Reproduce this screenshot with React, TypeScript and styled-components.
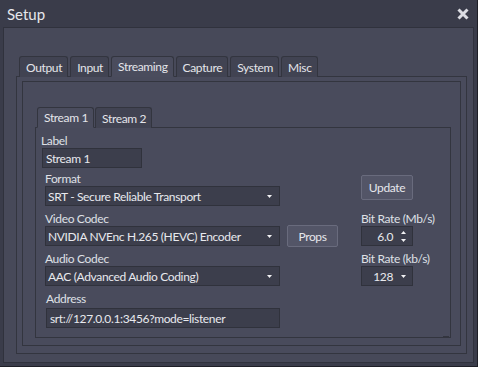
import React from "react";
import styled, { createGlobalStyle } from "styled-components";

const GlobalStyle = createGlobalStyle`
  html, body {
    margin: 0;
    padding: 0;
    width: 100%;
    height: 100%;
    overflow: hidden;
    background: #3a3c4a;
  }
  #root {
    width: 100%;
    height: 100%;
  }
  * {
    box-sizing: border-box;
  }
`;

const mainTabs = ["Output", "Input", "Streaming", "Capture", "System", "Misc"];
const streamTabs = ["Stream 1", "Stream 2"];

const Arrow = ({ up }: { up?: boolean }) => (
  <svg width="5" height="3" viewBox="0 0 5 3">
    <polygon
      points={up ? "0,3 5,3 2.5,0" : "0,0 5,0 2.5,3"}
      fill="#f2f2f4"
    />
  </svg>
);

const App: React.FC = () => {
  return (
    <Window>
      <GlobalStyle />
      <TitleBar>
        <Title>Setup</Title>
        <svg width="12" height="12" viewBox="0 0 12 12">
          <path
            d="M1.5 1.5 L10.5 10.5 M10.5 1.5 L1.5 10.5"
            stroke="#dcdde3"
            strokeWidth="3"
          />
        </svg>
      </TitleBar>
      <Body>
        <TabWidget>
          <TabBar $indent={3} $gap={2}>
            {mainTabs.map((t) => (
              <Tab key={t} $active={t === "Streaming"}>
                {t}
              </Tab>
            ))}
          </TabBar>
          <TabPane $pad="4px 5px 7px 5px">
            <GroupFrame>
              <TabWidget>
                <TabBar $indent={2} $gap={1}>
                  {streamTabs.map((t) => (
                    <Tab key={t} $active={t === "Stream 1"}>
                      {t}
                    </Tab>
                  ))}
                </TabBar>
                <TabPane $pad="0 0 0 9px">
                  <Form>
                    <FieldLabel $area="lbl" $shift={-4}>
                      Label
                    </FieldLabel>
                    <TextField $area="name" $shift={-3} $width={100}>
                      Stream 1
                    </TextField>

                    <FieldLabel $area="fmtl">Format</FieldLabel>
                    <Combo $area="fmt">
                      <span>SRT - Secure Reliable Transport</span>
                      <Arrow />
                    </Combo>
                    <Button $area="upd" $height={25}>
                      Update
                    </Button>

                    <FieldLabel $area="vidl">Video Codec</FieldLabel>
                    <Combo $area="vid">
                      <span>NVIDIA NVEnc H.265 (HEVC) Encoder</span>
                      <Arrow />
                    </Combo>
                    <Button $area="props" $height={22}>
                      Props
                    </Button>
                    <FieldLabel $area="brl">Bit Rate (Mb/s)</FieldLabel>
                    <SmallBox $area="br">
                      <span>6.0</span>
                      <SpinArrows>
                        <Arrow up />
                        <Arrow />
                      </SpinArrows>
                    </SmallBox>

                    <FieldLabel $area="audl">Audio Codec</FieldLabel>
                    <Combo $area="aud">
                      <span>AAC (Advanced Audio Coding)</span>
                      <Arrow />
                    </Combo>
                    <FieldLabel $area="abl">Bit Rate (kb/s)</FieldLabel>
                    <SmallBox $area="ab">
                      <span>128</span>
                      <Arrow />
                    </SmallBox>

                    <FieldLabel $area="addrl" $shift={1} $lift={2}>
                      Address
                    </FieldLabel>
                    <TextField $area="addr" $shift={1}>
                      srt://127.0.0.1:3456?mode=listener
                    </TextField>
                  </Form>
                  <Grip />
                </TabPane>
              </TabWidget>
            </GroupFrame>
          </TabPane>
        </TabWidget>
      </Body>
    </Window>
  );
};

const Window = styled.div`
  width: 478px;
  height: 367px;
  display: flex;
  flex-direction: column;
  background: #3a3c4a;
  border-right: 1px solid #1e1f27;
  border-bottom: 1px solid #1e1f27;
  font-family: Lato, "Liberation Sans", sans-serif;
  font-size: 12px;
  letter-spacing: -0.35px;
  color: #e2e3e8;
`;

const TitleBar = styled.div`
  height: 27px;
  flex: none;
  display: flex;
  align-items: center;
  justify-content: space-between;
  padding: 0 8px 0 7px;
`;

const Title = styled.span`
  font-size: 15px;
  letter-spacing: 0;
  color: #e6e7ec;
`;

const Body = styled.div`
  flex: 1;
  margin: 0 3px 3px 3px;
  display: flex;
  background: #474959;
  border: 1px solid #30323d;
  padding: 28px 6px 8px 12px;
`;

const TabWidget = styled.div`
  flex: 1;
  display: flex;
  flex-direction: column;
`;

const TabBar = styled.div<{ $indent: number; $gap: number }>`
  height: 20px;
  flex: none;
  display: flex;
  gap: ${(p) => p.$gap}px;
  padding-left: ${(p) => p.$indent}px;
  position: relative;
  z-index: 1;
`;

const Tab = styled.div<{ $active: boolean }>`
  height: 21px;
  padding: 0 5px 0 6px;
  display: flex;
  align-items: center;
  background: ${(p) => (p.$active ? "#4a4c5d" : "#414352")};
  border: 1px solid #33353f;
  border-bottom: ${(p) => (p.$active ? "1px solid #4a4c5d" : "none")};
  border-radius: 3px 3px 0 0;
  color: #e4e5ea;
  white-space: nowrap;
`;

const TabPane = styled.div<{ $pad: string }>`
  flex: 1;
  display: flex;
  flex-direction: column;
  position: relative;
  background: #494b5c;
  border: 1px solid #33353f;
  padding: ${(p) => p.$pad};
`;

const GroupFrame = styled.div`
  flex: 1;
  display: flex;
  border: 1px solid #33353f;
  padding: 25px 9px 7px 12px;
`;

const Form = styled.div`
  display: grid;
  grid-template-columns: 235px 7px 51px 23px 52px;
  grid-template-rows: 20px 20px 18px 20px 20px 20px 20px 20px 22px 20px;
  grid-template-areas:
    "lbl . . . ."
    "name . . . ."
    "fmtl . . . upd"
    "fmt . . . upd"
    "vidl . . . brl"
    "vid . props . br"
    "audl . . . abl"
    "aud . . . ab"
    "addrl . . . ."
    "addr . . . .";
`;

const FieldLabel = styled.div<{ $area: string; $shift?: number; $lift?: number }>`
  grid-area: ${(p) => p.$area};
  align-self: end;
  line-height: 14px;
  margin-left: ${(p) => p.$shift ?? 0}px;
  margin-bottom: ${(p) => p.$lift ?? 0}px;
  color: #dfe0e6;
  white-space: nowrap;
`;

const Field = styled.div<{ $area: string }>`
  grid-area: ${(p) => p.$area};
  height: 20px;
  display: flex;
  align-items: center;
  background: #3c3e4c;
  border: 1px solid #30323c;
  color: #e8e9ee;
  white-space: nowrap;
`;

const TextField = styled(Field)<{ $shift?: number; $width?: number }>`
  margin-left: ${(p) => p.$shift ?? 0}px;
  width: ${(p) => (p.$width ? `${p.$width}px` : "auto")};
  padding-left: 3px;
`;

const Combo = styled(Field)`
  justify-content: space-between;
  padding: 0 7px 0 2px;
`;

const SmallBox = styled(Field)`
  justify-content: flex-end;
  gap: 8px;
  padding-right: 6px;
`;

const SpinArrows = styled.div`
  display: flex;
  flex-direction: column;
  gap: 5px;
`;

const Button = styled.div<{ $area: string; $height: number }>`
  grid-area: ${(p) => p.$area};
  align-self: center;
  height: ${(p) => p.$height}px;
  display: flex;
  align-items: center;
  justify-content: center;
  background: #535567;
  border: 1px solid #696b7d;
  border-radius: 2px;
  color: #e6e7ec;
`;

const Grip = styled.div`
  position: absolute;
  right: 1px;
  bottom: 0;
  width: 6px;
  height: 1px;
  background: #33353f;
`;

export default App;
